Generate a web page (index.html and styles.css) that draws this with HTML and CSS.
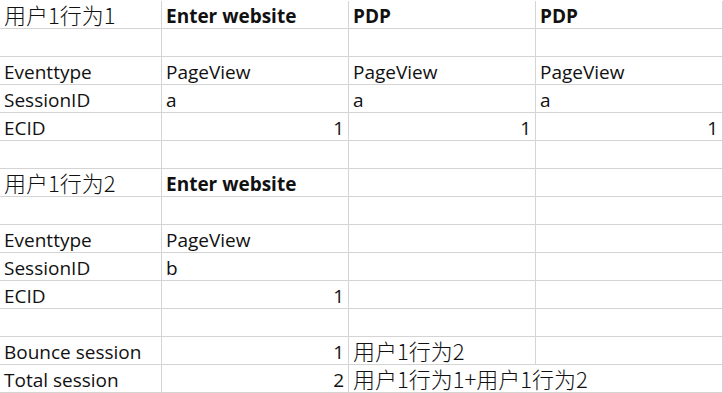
FILE: index.html
```html
<!DOCTYPE html>
<html lang="zh">
<head>
<meta charset="utf-8">
<link rel="stylesheet" href="styles.css">
</head>
<body>
<div class="sheet">
  <div class="c zh">用户1行为1</div><div class="c b">Enter website</div><div class="c b">PDP</div><div class="c b">PDP</div>
  <div class="c"></div><div class="c"></div><div class="c"></div><div class="c"></div>
  <div class="c">Eventtype</div><div class="c">PageView</div><div class="c">PageView</div><div class="c">PageView</div>
  <div class="c">SessionID</div><div class="c">a</div><div class="c">a</div><div class="c">a</div>
  <div class="c">ECID</div><div class="c n">1</div><div class="c n">1</div><div class="c n">1</div>
  <div class="c"></div><div class="c"></div><div class="c"></div><div class="c"></div>
  <div class="c zh">用户1行为2</div><div class="c b">Enter website</div><div class="c"></div><div class="c"></div>
  <div class="c"></div><div class="c"></div><div class="c"></div><div class="c"></div>
  <div class="c">Eventtype</div><div class="c">PageView</div><div class="c"></div><div class="c"></div>
  <div class="c">SessionID</div><div class="c">b</div><div class="c"></div><div class="c"></div>
  <div class="c">ECID</div><div class="c n">1</div><div class="c"></div><div class="c"></div>
  <div class="c"></div><div class="c"></div><div class="c"></div><div class="c"></div>
  <div class="c">Bounce session</div><div class="c n">1</div><div class="c zh">用户1行为2</div><div class="c"></div>
  <div class="c">Total session</div><div class="c n">2</div><div class="c zh over">用户1行为1+用户1行为2</div><div class="c"></div>
</div>
</body>
</html>
```
FILE: styles.css
```css
html, body {
  margin: 0;
  padding: 0;
  background: #ffffff;
}
.sheet {
  display: grid;
  grid-template-columns: 162px 187px 187px 187px;
  grid-auto-rows: 28px;
  padding-top: 1px;
  width: 723px;
  font-family: "Open Sans", "Noto Sans CJK SC", sans-serif;
  font-size: 19px;
  color: #111111;
}
.c {
  box-sizing: border-box;
  border-right: 1px solid #d4d4d4;
  border-bottom: 1px solid #d4d4d4;
  padding: 3px 4px 0 4px;
  line-height: 24px;
  white-space: nowrap;
}
.zh {
  font-family: "Noto Sans CJK SC", sans-serif;
  font-size: 22px;
  font-weight: 300;
  padding-top: 0;
  line-height: 27px;
}
.b {
  font-weight: bold;
}
.n {
  text-align: right;
}
.over {
  border-right: none;
  position: relative;
  z-index: 1;
}
```
